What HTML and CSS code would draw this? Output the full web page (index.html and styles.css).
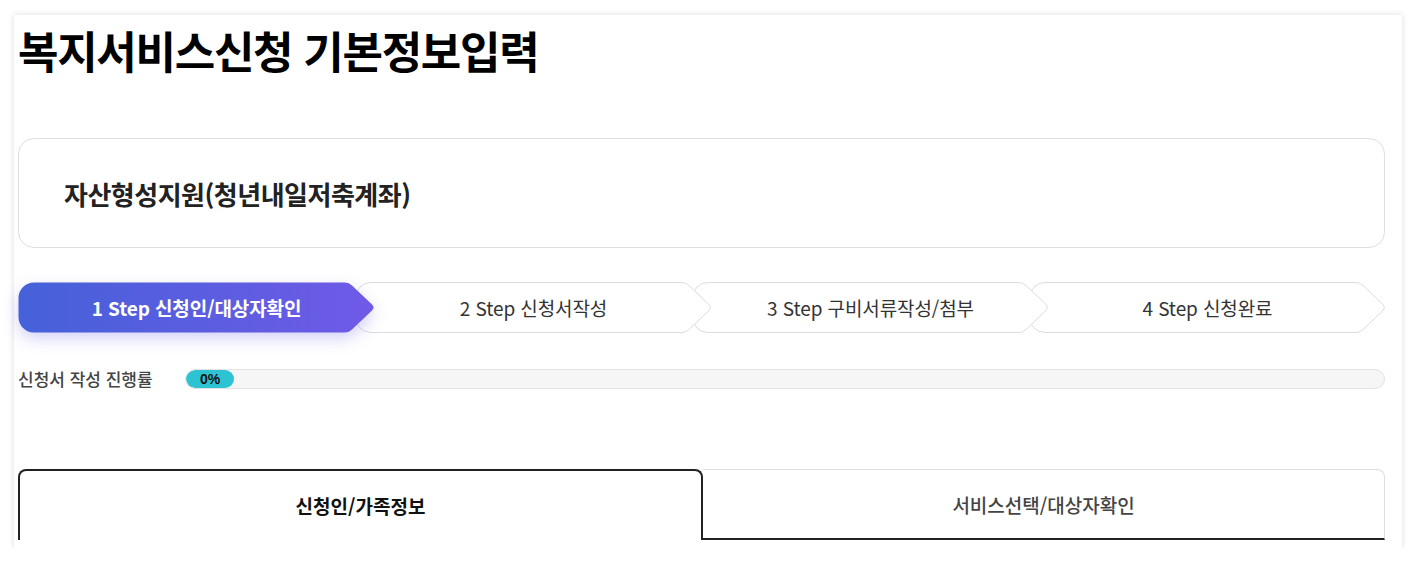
FILE: index.html
```html
<!DOCTYPE html>
<html lang="ko">
<head>
  <meta charset="UTF-8">
  <meta name="viewport" content="width=device-width, initial-scale=1.0">
  <link rel="stylesheet" href="styles.css">
</head>
<body>
  <div class="card">
    <h1 class="page-title">복지서비스신청 기본정보입력</h1>

    <div class="service-box">
      <h2>자산형성지원(청년내일저축계좌)</h2>
    </div>

    <ol class="steps">
      <li class="step active">
        <svg class="step-shape" width="357" height="51" viewBox="0 0 357 51">
          <defs>
            <linearGradient id="stepGrad" x1="0" y1="0" x2="1" y2="0">
              <stop offset="0" stop-color="#4561d9"/>
              <stop offset="1" stop-color="#6f5ae7"/>
            </linearGradient>
          </defs>
          <path d="M16,0.5 H327 Q331,0.5 334,3.5 L354,22.5 Q357,25.5 354,28.5 L334,47.5 Q331,50.5 327,50.5 H16 A15.5,15.5 0 0 1 0.5,35 V16 A15.5,15.5 0 0 1 16,0.5 Z"/>
        </svg>
        <span>1 Step 신청인/대상자확인</span>
      </li>
      <li class="step">
        <svg class="step-shape" width="357" height="51" viewBox="0 0 357 51">
          <path d="M16,0.5 H327 Q331,0.5 334,3.5 L354,22.5 Q357,25.5 354,28.5 L334,47.5 Q331,50.5 327,50.5 H16 A15.5,15.5 0 0 1 0.5,35 V16 A15.5,15.5 0 0 1 16,0.5 Z"/>
        </svg>
        <span>2 Step 신청서작성</span>
      </li>
      <li class="step">
        <svg class="step-shape" width="357" height="51" viewBox="0 0 357 51">
          <path d="M16,0.5 H327 Q331,0.5 334,3.5 L354,22.5 Q357,25.5 354,28.5 L334,47.5 Q331,50.5 327,50.5 H16 A15.5,15.5 0 0 1 0.5,35 V16 A15.5,15.5 0 0 1 16,0.5 Z"/>
        </svg>
        <span>3 Step 구비서류작성/첨부</span>
      </li>
      <li class="step">
        <svg class="step-shape" width="357" height="51" viewBox="0 0 357 51">
          <path d="M16,0.5 H327 Q331,0.5 334,3.5 L354,22.5 Q357,25.5 354,28.5 L334,47.5 Q331,50.5 327,50.5 H16 A15.5,15.5 0 0 1 0.5,35 V16 A15.5,15.5 0 0 1 16,0.5 Z"/>
        </svg>
        <span>4 Step 신청완료</span>
      </li>
    </ol>

    <div class="progress-row">
      <span class="progress-label">신청서 작성 진행률</span>
      <div class="progress-bar">
        <div class="progress-fill">0%</div>
      </div>
    </div>

    <div class="tabs">
      <button class="tab active">신청인/가족정보</button>
      <button class="tab">서비스선택/대상자확인</button>
    </div>
  </div>
</body>
</html>
```

FILE: styles.css
```css
* {
  box-sizing: border-box;
}

body {
  margin: 0;
  background: #ffffff;
  font-family: "Noto Sans CJK KR", "Noto Sans", sans-serif;
  color: #222;
}

/* 카드 */
.card {
  width: 1388px;
  margin: 15px 0 0 14px;
  padding: 9px 17px 8px 4px;
  background: #fff;
  box-shadow: 0 0 6px rgba(0,0,0,0.14);
}

.page-title {
  margin: 0;
  font-size: 44px;
  line-height: 52px;
  font-weight: 700;
  letter-spacing: -1.3px;
  color: #000;
}

/* 서비스명 박스 */
.service-box {
  margin-top: 62px;
  height: 110px;
  border: 1px solid #dedede;
  border-radius: 16px;
  padding-left: 45px;
  display: flex;
  align-items: center;
}

.service-box h2 {
  margin: 0;
  font-size: 26px;
  font-weight: 700;
  letter-spacing: -0.5px;
  color: #222;
}

/* 단계 */
.steps {
  list-style: none;
  margin: 34px 0 0;
  padding: 0;
  display: flex;
}

.step {
  position: relative;
  width: 357px;
  height: 51px;
  flex: none;
  display: flex;
  align-items: center;
  justify-content: center;
  font-size: 19px;
  letter-spacing: -0.1px;
  color: #333;
}

.step + .step {
  margin-left: -20px;
}

.step:nth-child(1) { z-index: 4; }
.step:nth-child(2) { z-index: 3; }
.step:nth-child(3) { z-index: 2; }
.step:nth-child(4) { z-index: 1; }

.step-shape {
  position: absolute;
  top: 0;
  left: 0;
}

.step-shape path {
  fill: #fff;
  stroke: #dcdcdc;
  stroke-width: 1;
}

.step.active .step-shape {
  filter: drop-shadow(0 6px 8px rgba(98,88,225,0.28));
}

.step.active .step-shape path {
  fill: url(#stepGrad);
  stroke: none;
}

.step span {
  position: relative;
}

.step.active {
  color: #fff;
  font-weight: 700;
}

/* 진행률 */
.progress-row {
  margin-top: 36px;
  height: 20px;
  display: flex;
  align-items: center;
}

.progress-label {
  width: 167px;
  flex: none;
  font-size: 17px;
  line-height: 20px;
  font-weight: 500;
  color: #444;
}

.progress-bar {
  flex: 1;
  height: 20px;
  border: 1px solid #e3e3e3;
  border-radius: 10px;
  background: #f6f6f6;
  overflow: hidden;
}

.progress-fill {
  width: 48px;
  height: 100%;
  border-radius: 10px;
  background: #2ec3d3;
  font-family: "Liberation Sans", Arial, sans-serif;
  font-size: 14px;
  font-weight: 700;
  line-height: 18px;
  text-align: center;
  color: #111;
}

/* 탭 */
.tabs {
  margin-top: 80px;
  display: flex;
}

.tab {
  flex: 1;
  height: 71px;
  background: #fff;
  font-family: inherit;
  font-size: 19px;
  cursor: pointer;
}

.tab.active {
  border: 2px solid #222;
  border-bottom: none;
  border-radius: 8px 8px 0 0;
  font-weight: 700;
  color: #111;
}

.tab:not(.active) {
  border: 1px solid #dedede;
  border-left: none;
  border-bottom: 2px solid #222;
  border-radius: 0 8px 0 0;
  font-weight: 500;
  color: #444;
}
```
